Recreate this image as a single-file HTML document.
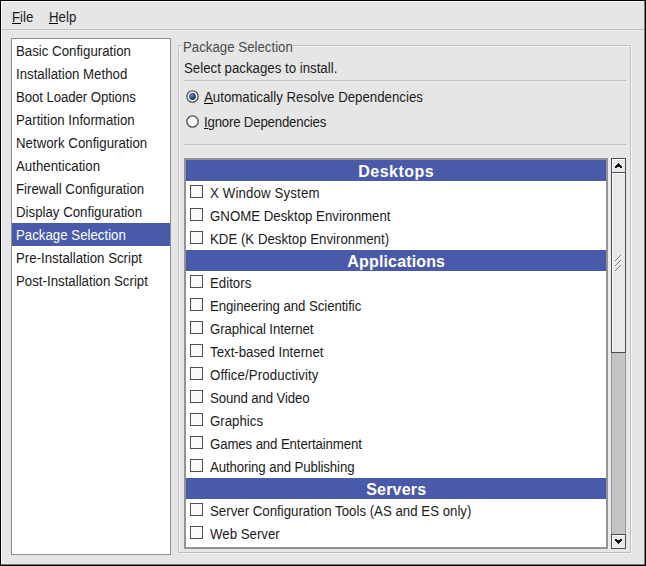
<!DOCTYPE html>
<html><head><meta charset="utf-8">
<style>
*{margin:0;padding:0;box-sizing:border-box}
html,body{width:646px;height:566px;overflow:hidden;background:#e6e6e6}
body{position:relative;font-family:"Liberation Sans",sans-serif;font-size:13px;color:#1c1c1c}
.a{position:absolute}
.t,.row span,.it span{position:absolute;white-space:nowrap;line-height:15px;transform:scale(1.02,1.06);transform-origin:0 12px}
.u{text-decoration:underline;text-underline-offset:2px}
#win{left:0;top:0;width:646px;height:566px;border:1px solid #000;background:#e6e6e6}
#win:before{content:"";position:absolute;left:0;top:0;right:0;bottom:0;border-left:1px solid #fff;border-top:1px solid #fff}
.u{text-decoration:underline}
.hl{position:absolute;height:1px}
.vl{position:absolute;width:1px}
#left{left:11px;top:38px;width:160px;height:517px;border:1px solid #8e8e8e;background:#fff}
.row{position:absolute;left:0;width:158px;height:23px}
.row span{position:absolute;left:4px;top:5px;white-space:nowrap;line-height:15px}
.sel{background:#4a5aaa;color:#fff}
#pkg{left:184px;top:158px;width:424px;height:391px;border:2px solid #939393;background:#fff;overflow:hidden}
.hd{position:absolute;left:0;width:420px;height:21px;background:#4a5aaa;color:#fff;font-weight:bold;font-size:16px;text-align:center;line-height:23px;letter-spacing:0.5px;text-indent:0.5px}
.it{position:absolute;left:0;width:420px;height:23px}
.it i{position:absolute;left:4px;top:4px;width:13px;height:13px;border:1px solid #505050;background:#fafafa}
.it span{position:absolute;left:24px;top:5px;white-space:nowrap;line-height:15px}
.radio{position:absolute;width:13px;height:13px;border-radius:50%;border:1px solid #555;background:#fff}
.radio.on:after{content:"";position:absolute;left:2px;top:2px;width:7px;height:7px;border-radius:50%;background:radial-gradient(circle at 45% 45%,#20305a 0,#3a5598 55%,#5a78b8 100%)}
#sb{left:611px;top:158px;width:15px;height:391px;background:#c4c4c4}
.btn{position:absolute;left:0;width:15px;border:1px solid #4a4a4a;background:#eeeeee}
</style></head><body>
<div id="win" class="a"></div>
<div class="vl" style="left:644px;top:1px;height:564px;background:#7c7c7c"></div>
<div class="hl" style="left:1px;top:564px;width:644px;background:#7c7c7c"></div>
<div class="t" style="left:12px;top:10px">File</div>
<div class="hl" style="left:12px;top:23px;width:9px;background:#000"></div>
<div class="t" style="left:49px;top:10px">Help</div>
<div class="hl" style="left:49px;top:23px;width:9px;background:#000"></div>
<div class="hl" style="left:1px;top:29px;width:643px;background:#c0c0c0"></div>
<div class="hl" style="left:1px;top:30px;width:643px;background:#ececec"></div>

<div id="left" class="a">
<div class="row" style="top:0"><span>Basic Configuration</span></div>
<div class="row" style="top:23px"><span>Installation Method</span></div>
<div class="row" style="top:46px"><span style="letter-spacing:-0.1px">Boot Loader Options</span></div>
<div class="row" style="top:69px"><span>Partition Information</span></div>
<div class="row" style="top:92px"><span>Network Configuration</span></div>
<div class="row" style="top:115px"><span>Authentication</span></div>
<div class="row" style="top:138px"><span>Firewall Configuration</span></div>
<div class="row" style="top:161px"><span>Display Configuration</span></div>
<div class="row sel" style="top:184px"><span>Package Selection</span></div>
<div class="row" style="top:207px"><span>Pre-Installation Script</span></div>
<div class="row" style="top:230px"><span>Post-Installation Script</span></div>
</div>

<!-- frame -->
<div class="hl" style="left:178px;top:45px;width:4px;background:#c0c0c0"></div>
<div class="hl" style="left:179px;top:46px;width:3px;background:#f4f4f4"></div>
<div class="hl" style="left:293px;top:45px;width:338px;background:#c0c0c0"></div>
<div class="hl" style="left:293px;top:46px;width:337px;background:#f4f4f4"></div>
<div class="vl" style="left:178px;top:45px;height:508px;background:#c0c0c0"></div>
<div class="vl" style="left:179px;top:46px;height:506px;background:#f4f4f4"></div>
<div class="vl" style="left:630px;top:45px;height:508px;background:#c0c0c0"></div>
<div class="vl" style="left:631px;top:45px;height:509px;background:#f4f4f4"></div>
<div class="hl" style="left:178px;top:552px;width:453px;background:#c0c0c0"></div>
<div class="hl" style="left:178px;top:553px;width:454px;background:#f4f4f4"></div>
<div class="t" style="left:183px;top:40px;color:#4a4a4a">Package Selection</div>

<div class="t" style="left:184px;top:61px">Select packages to install.</div>
<div class="hl" style="left:184px;top:80px;width:442px;background:#c2c2c2"></div>
<div class="hl" style="left:184px;top:81px;width:442px;background:#ececec"></div>

<svg class="a" style="left:184px;top:88px" width="18" height="40">
<defs><radialGradient id="rg" cx="38%" cy="35%" r="70%"><stop offset="0" stop-color="#6f8cc0"/><stop offset="0.45" stop-color="#36568f"/><stop offset="1" stop-color="#1c2f5c"/></radialGradient></defs>
<circle cx="8.5" cy="8.5" r="5.65" fill="#fff" stroke="#505050" stroke-width="1.35"/>
<circle cx="8.5" cy="8.5" r="3.4" fill="url(#rg)"/>
<circle cx="8.5" cy="33.5" r="5.65" fill="#fff" stroke="#505050" stroke-width="1.35"/>
</svg>
<div class="t" style="left:204px;top:90px">Automatically Resolve Dependencies</div>
<div class="hl" style="left:204px;top:103px;width:9px;background:#000"></div>

<div class="t" style="left:204px;top:115px;letter-spacing:-0.2px">Ignore Dependencies</div>
<div class="hl" style="left:204px;top:128px;width:4px;background:#000"></div>
<div class="hl" style="left:184px;top:144px;width:442px;background:#c2c2c2"></div>
<div class="hl" style="left:184px;top:145px;width:442px;background:#ececec"></div>

<div id="pkg" class="a">
<div class="hd" style="top:0">Desktops</div>
<div class="it" style="top:21px"><i></i><span style="letter-spacing:0.13px">X Window System</span></div>
<div class="it" style="top:44px"><i></i><span>GNOME Desktop Environment</span></div>
<div class="it" style="top:67px"><i></i><span>KDE (K Desktop Environment)</span></div>
<div class="hd" style="top:90px;letter-spacing:0.15px">Applications</div>
<div class="it" style="top:111px"><i></i><span>Editors</span></div>
<div class="it" style="top:134px"><i></i><span style="letter-spacing:-0.08px">Engineering and Scientific</span></div>
<div class="it" style="top:157px"><i></i><span style="letter-spacing:-0.11px">Graphical Internet</span></div>
<div class="it" style="top:180px"><i></i><span>Text-based Internet</span></div>
<div class="it" style="top:203px"><i></i><span style="letter-spacing:0.1px">Office/Productivity</span></div>
<div class="it" style="top:226px"><i></i><span style="letter-spacing:-0.13px">Sound and Video</span></div>
<div class="it" style="top:249px"><i></i><span>Graphics</span></div>
<div class="it" style="top:272px"><i></i><span style="letter-spacing:-0.13px">Games and Entertainment</span></div>
<div class="it" style="top:295px"><i></i><span style="letter-spacing:-0.125px">Authoring and Publishing</span></div>
<div class="hd" style="top:318px;letter-spacing:0.2px">Servers</div>
<div class="it" style="top:339px"><i></i><span>Server Configuration Tools (AS and ES only)</span></div>
<div class="it" style="top:362px"><i></i><span>Web Server</span></div>
<div class="it" style="top:385px"><i></i><span>Windows File Server</span></div>
</div>

<svg class="a" style="left:606px;top:154px" width="30" height="400" shape-rendering="crispEdges"><rect x="5" y="4" width="15" height="391" fill="#c4c4c4"/><rect x="5" y="4" width="15" height="15" fill="#4d4d4d"/><rect x="6" y="5" width="13" height="13" fill="#e9e9e9"/><rect x="6" y="5" width="13" height="1" fill="#fbfbfb"/><rect x="6" y="5" width="1" height="13" fill="#fbfbfb"/><rect x="5" y="18" width="15" height="181" fill="#4d4d4d"/><rect x="6" y="19" width="13" height="179" fill="#e9e9e9"/><rect x="6" y="19" width="13" height="1" fill="#fbfbfb"/><rect x="6" y="19" width="1" height="179" fill="#fbfbfb"/><rect x="5" y="380" width="15" height="15" fill="#4d4d4d"/><rect x="6" y="381" width="13" height="13" fill="#e9e9e9"/><rect x="6" y="381" width="13" height="1" fill="#fbfbfb"/><rect x="6" y="381" width="1" height="13" fill="#fbfbfb"/><rect x="12" y="9" width="1" height="1" fill="#111"/><rect x="11" y="10" width="3" height="1" fill="#111"/><rect x="10" y="11" width="5" height="1" fill="#111"/><rect x="9" y="12" width="7" height="1" fill="#111"/><rect x="9" y="13" width="2" height="1" fill="#111"/><rect x="14" y="13" width="2" height="1" fill="#111"/><rect x="9" y="385" width="2" height="1" fill="#111"/><rect x="14" y="385" width="2" height="1" fill="#111"/><rect x="9" y="386" width="7" height="1" fill="#111"/><rect x="10" y="387" width="5" height="1" fill="#111"/><rect x="11" y="388" width="3" height="1" fill="#111"/><rect x="12" y="389" width="1" height="1" fill="#111"/><rect x="9" y="106" width="1" height="1" fill="#7a7a7a"/><rect x="10" y="107" width="1" height="1" fill="#ffffff"/><rect x="10" y="105" width="1" height="1" fill="#7a7a7a"/><rect x="11" y="106" width="1" height="1" fill="#ffffff"/><rect x="11" y="104" width="1" height="1" fill="#7a7a7a"/><rect x="12" y="105" width="1" height="1" fill="#ffffff"/><rect x="12" y="103" width="1" height="1" fill="#7a7a7a"/><rect x="13" y="104" width="1" height="1" fill="#ffffff"/><rect x="13" y="102" width="1" height="1" fill="#7a7a7a"/><rect x="14" y="103" width="1" height="1" fill="#ffffff"/><rect x="14" y="101" width="1" height="1" fill="#7a7a7a"/><rect x="15" y="102" width="1" height="1" fill="#ffffff"/><rect x="9" y="111" width="1" height="1" fill="#7a7a7a"/><rect x="10" y="112" width="1" height="1" fill="#ffffff"/><rect x="10" y="110" width="1" height="1" fill="#7a7a7a"/><rect x="11" y="111" width="1" height="1" fill="#ffffff"/><rect x="11" y="109" width="1" height="1" fill="#7a7a7a"/><rect x="12" y="110" width="1" height="1" fill="#ffffff"/><rect x="12" y="108" width="1" height="1" fill="#7a7a7a"/><rect x="13" y="109" width="1" height="1" fill="#ffffff"/><rect x="13" y="107" width="1" height="1" fill="#7a7a7a"/><rect x="14" y="108" width="1" height="1" fill="#ffffff"/><rect x="14" y="106" width="1" height="1" fill="#7a7a7a"/><rect x="15" y="107" width="1" height="1" fill="#ffffff"/><rect x="9" y="116" width="1" height="1" fill="#7a7a7a"/><rect x="10" y="117" width="1" height="1" fill="#ffffff"/><rect x="10" y="115" width="1" height="1" fill="#7a7a7a"/><rect x="11" y="116" width="1" height="1" fill="#ffffff"/><rect x="11" y="114" width="1" height="1" fill="#7a7a7a"/><rect x="12" y="115" width="1" height="1" fill="#ffffff"/><rect x="12" y="113" width="1" height="1" fill="#7a7a7a"/><rect x="13" y="114" width="1" height="1" fill="#ffffff"/><rect x="13" y="112" width="1" height="1" fill="#7a7a7a"/><rect x="14" y="113" width="1" height="1" fill="#ffffff"/><rect x="14" y="111" width="1" height="1" fill="#7a7a7a"/><rect x="15" y="112" width="1" height="1" fill="#ffffff"/><rect x="5" y="199" width="1" height="181" fill="#959595"/><rect x="19" y="199" width="1" height="181" fill="#959595"/><rect x="2" y="4" width="3" height="391" fill="#ebebeb"/></svg>
</body></html>
